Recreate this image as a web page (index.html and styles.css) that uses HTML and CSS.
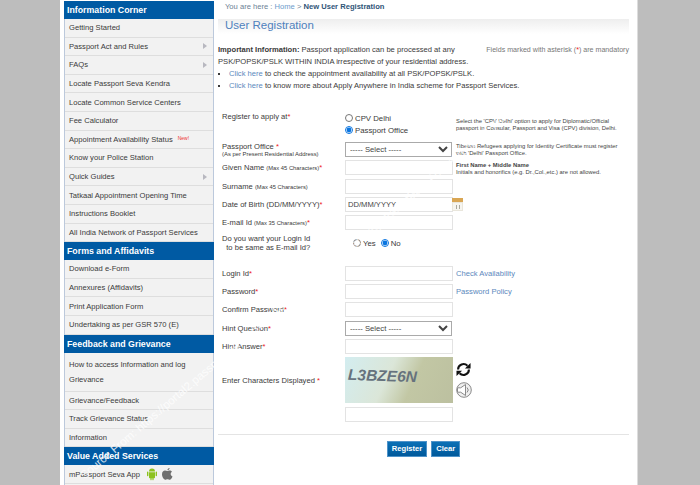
FILE: index.html
```html
<!DOCTYPE html>
<html lang="en">
<head>
<meta charset="UTF-8">
<meta name="viewport" content="width=device-width, initial-scale=1.0">
<title>User Registration</title>
<link rel="stylesheet" href="styles.css">
</head>
<body>
<div class="page">
  <div class="sidebar">
    <h3 class="side-head">Information Corner</h3>
    <a class="side-item">Getting Started</a>
    <a class="side-item">Passport Act and Rules<span class="arrow"></span></a>
    <a class="side-item">FAQs<span class="arrow"></span></a>
    <a class="side-item">Locate Passport Seva Kendra</a>
    <a class="side-item">Locate Common Service Centers</a>
    <a class="side-item">Fee Calculator</a>
    <a class="side-item">Appointment Availability Status<span class="new">New!</span></a>
    <a class="side-item">Know your Police Station</a>
    <a class="side-item">Quick Guides<span class="arrow"></span></a>
    <a class="side-item">Tatkaal Appointment Opening Time</a>
    <a class="side-item">Instructions Booklet</a>
    <a class="side-item">All India Network of Passport Services</a>
    <h3 class="side-head">Forms and Affidavits</h3>
    <a class="side-item">Download e-Form</a>
    <a class="side-item">Annexures (Affidavits)</a>
    <a class="side-item">Print Application Form</a>
    <a class="side-item">Undertaking as per GSR 570 (E)</a>
    <h3 class="side-head">Feedback and Grievance</h3>
    <a class="side-item tall">How to access Information and log Grievance</a>
    <a class="side-item">Grievance/Feedback</a>
    <a class="side-item">Track Grievance Status</a>
    <a class="side-item">Information</a>
    <h3 class="side-head">Value Added Services</h3>
    <a class="side-item">mPassport Seva App
      <svg class="app-icon" viewBox="0 0 14 14" width="14" height="14"><path fill="#8cc21f" d="M4 4.600a3 3 0 0 1 6 0zM4 5.200h6v5.200a.8.8 0 0 1-.8.8H8.600v1.600a.7.7 0 0 1-1.200 0v-1.600H6.600v1.600a.7.7 0 0 1-1.200 0v-1.600h-.6a.8.8 0 0 1-.8-.8zM2 5.200a.7.7 0 0 1 1.400 0v3.400a.7.7 0 0 1-1.400 0zM10.600 5.200a.7.7 0 0 1 1.400 0v3.400a.7.7 0 0 1-1.400 0z"/></svg>
      <svg class="app-icon" viewBox="0 0 14 14" width="14" height="14"><path fill="#6f6f6f" d="M9.600 1c.1 1.100-.9 2.300-2.200 2.300C7.300 2.100 8.400 1.100 9.600 1zM7.300 4.100c.6 0 1.300-.6 2.400-.6.900 0 1.800.5 2.300 1.200-2 1.200-1.600 3.900.5 4.700-.6 1.500-1.700 3.300-2.800 3.300-.9 0-1.200-.5-2.200-.5s-1.400.5-2.200.5C4 12.700 2 9.800 2 7.200c0-2.300 1.500-3.600 3-3.600.9 0 1.700.5 2.300.5z"/></svg>
    </a>
  </div>

  <div class="main">
    <p class="crumbs">You are here : <a class="crumb-link">Home</a> &gt; <b>New User Registration</b></p>
    <h1 class="title">User Registration</h1>

    <div class="info">
      <div class="info-top">
        <p><b>Important Information:</b> Passport application can be processed at any<br>PSK/POPSK/PSLK WITHIN INDIA irrespective of your residential address.</p>
        <span class="mandatory">Fields marked with asterisk (<i class="req">*</i>) are mandatory</span>
      </div>
      <ul class="info-list">
        <li><a class="link">Click here</a> to check the appointment availability at all PSK/POPSK/PSLK.</li>
        <li><a class="link">Click here</a> to know more about Apply Anywhere in India scheme for Passport Services.</li>
      </ul>
    </div>

    <form class="form">
      <div class="row radio-row">
        <div class="label">Register to apply at<i class="req">*</i></div>
        <div class="control radios">
          <label class="radio"><input type="radio" name="apply"> CPV Delhi</label>
          <label class="radio"><input type="radio" name="apply" checked> Passport Office</label>
        </div>
        <div class="note">Select the 'CPV Delhi' option to apply for Diplomatic/Official passport in Consular, Passport and Visa (CPV) division, Delhi.</div>
      </div>

      <div class="row">
        <div class="label">Passport Office <i class="req">*</i><small class="sub">(As per Present Residential Address)</small></div>
        <div class="control"><select class="select"><option>----- Select -----</option></select></div>
        <div class="note">Tibetan Refugees applying for Identity Certificate must register with 'Delhi' Passport Office.</div>
      </div>
      <div class="row">
        <div class="label">Given Name <small>(Max 45 Characters)</small><i class="req">*</i></div>
        <div class="control"><input class="text" type="text"></div>
        <div class="note name-note"><b>First Name + Middle Name</b><br>Initials and honorifics (e.g. Dr.,Col.,etc.) are not allowed.</div>
      </div>
      <div class="row">
        <div class="label">Surname <small>(Max 45 Characters)</small></div>
        <div class="control"><input class="text" type="text"></div>
      </div>
      <div class="row">
        <div class="label">Date of Birth (DD/MM/YYYY)<i class="req">*</i></div>
        <div class="control"><input class="text" type="text" value="DD/MM/YYYY"></div>
        <svg class="calendar" viewBox="0 0 11 13" width="11" height="13"><rect width="11" height="13" fill="#e9e6dc"/><rect width="11" height="4" fill="#d9a654"/><rect x="1" y="5" width="9" height="7" fill="#f6f5f0"/><path d="M4 7h1v4H4zM7 7h1v4H7z" fill="#a9a9a0"/></svg>
      </div>
      <div class="row">
        <div class="label">E-mail Id <small>(Max 35 Characters)</small><i class="req">*</i></div>
        <div class="control"><input class="text" type="text"></div>
      </div>
      <div class="row question-row">
        <div class="label question">Do you want your Login Id<br>&nbsp;&nbsp;to be same as E-mail Id?</div>
        <div class="control same-radios">
          <label class="radio"><input type="radio" name="same"> Yes</label>
          <label class="radio"><input type="radio" name="same" checked> No</label>
        </div>
      </div>

      <div class="row">
        <div class="label">Login Id<i class="req">*</i></div>
        <div class="control"><input class="text" type="text"></div>
        <a class="link side-link">Check Availability</a>
      </div>
      <div class="row">
        <div class="label">Password<i class="req">*</i></div>
        <div class="control"><input class="text" type="text"></div>
        <a class="link side-link">Password Policy</a>
      </div>
      <div class="row">
        <div class="label">Confirm Password<i class="req">*</i></div>
        <div class="control"><input class="text" type="text"></div>
      </div>
      <div class="row">
        <div class="label">Hint Question<i class="req">*</i></div>
        <div class="control"><select class="select"><option>----- Select -----</option></select></div>
      </div>
      <div class="row">
        <div class="label">Hint Answer<i class="req">*</i></div>
        <div class="control"><input class="text" type="text"></div>
      </div>

      <div class="row captcha-row">
        <div class="label">Enter Characters Displayed <i class="req">*</i></div>
        <div class="captcha"><span class="captcha-text">L3BZE6N</span></div>
        <div class="captcha-tools">
          <svg viewBox="0 0 16 16" width="15" height="15" fill="none" stroke="#111" stroke-width="2.200"><path d="M2.200 8a5.800 5.800 0 0 1 10-4"/><path d="M13.800 8a5.800 5.800 0 0 1-10 4"/><path d="M9.500 6.800h6V1z" fill="#111" stroke="none"/><path d="M6.500 9.200h-6V15z" fill="#111" stroke="none"/></svg>
          <svg viewBox="0 0 16 16" width="16" height="16" fill="#efefef" stroke="#8a8a8a" stroke-width="1"><circle cx="8" cy="8" r="7.300"/><path d="M1.500 5.800h3.200L9.500 2.500v11L4.700 10.200H1.500z" fill="#fff"/><path d="M11 5.500a3.500 3.500 0 0 1 0 5" fill="none"/></svg>
        </div>
      </div>
      <div class="row">
        <div class="label"></div>
        <div class="control"><input class="text" type="text"></div>
      </div>

      <div class="actions">
        <button class="btn" type="button">Register</button>
        <button class="btn" type="button">Clear</button>
      </div>
    </form>
  </div>
</div>
<div class="watermark">Source From: https://portal2.passportindia.gov.in/AppOnlineProject/user/RegistrationBaseAction?request_locale=en</div>
</body>
</html>
```

FILE: styles.css
```css
html, body {
  height: 100%;
}
body {
  font-family: "Liberation Sans", Arial, sans-serif;
  background-color: #bdbdbd;
  margin: 0;
  padding: 0;
  overflow: hidden;
  color: #333;
}
.page {
  display: flex;
  box-sizing: border-box;
  width: 578px;
  height: 485px;
  margin-left: 60px;
  padding: 1px 0 0 4px;
  background-color: #fff;
  border-right: 1px solid #ddd;
  overflow: hidden;
}

/* left menu */
.sidebar {
  box-sizing: border-box;
  width: 150px;
  flex: none;
  display: flex;
  flex-direction: column;
  border: solid #bcc9dc;
  border-width: 0 1px;
  background-color: #f2f2f2;
}
.side-head {
  box-sizing: border-box;
  height: 18px;
  margin: 0 -1px;
  padding-left: 3px;
  background-color: #005aa3;
  color: #fff;
  font-size: 8.800px;
  line-height: 18px;
  font-weight: bold;
}
.side-item {
  box-sizing: border-box;
  display: flex;
  align-items: center;
  height: 18.600px;
  padding: 0 4px;
  border-bottom: 1px solid #dedede;
  font-size: 7.600px;
  color: #3a3a3a;
  white-space: nowrap;
}
.side-item.tall {
  height: 39px;
  padding-right: 20px;
  white-space: normal;
  line-height: 15px;
}
.arrow {
  margin-left: auto;
  margin-right: 2px;
  border-left: 4px solid #b8b8c0;
  border-top: 3.500px solid transparent;
  border-bottom: 3.500px solid transparent;
}
.new {
  margin: -3px 0 0 5px;
  font-size: 5px;
  color: #e33;
}
.app-icon {
  margin-left: 5px;
}
.app-icon + .app-icon {
  margin-left: 1px;
}

/* main column */
.main {
  box-sizing: border-box;
  width: 411px;
  flex: none;
  margin-left: 4px;
  font-size: 7.600px;
}
.crumbs {
  height: 18px;
  margin: 0;
  padding-left: 7px;
  font-size: 7.600px;
  line-height: 11px;
  color: #6c7f95;
}
.crumbs b {
  color: #2f5578;
}
.crumb-link {
  color: #6e9bcb;
}
.title {
  box-sizing: border-box;
  height: 25px;
  margin: 0;
  padding-left: 7px;
  background: linear-gradient(to bottom, #eee, #fff 60%);
  color: #4f81bd;
  font-size: 11.500px;
  font-weight: normal;
  line-height: 13px;
}
.info {
  line-height: 12px;
  color: #3a3a3a;
}
.info p {
  margin: 0;
}
.info-top {
  display: flex;
  justify-content: space-between;
}
.mandatory {
  font-size: 7.100px;
  color: #777;
  white-space: nowrap;
}
.info-list {
  margin: 0;
  padding-left: 11px;
  list-style: square;
}
.link {
  color: #5b88bd;
}
.req {
  color: #e22;
  font-style: normal;
}

/* form rows */
.form {
  margin-top: 18px;
  padding-left: 4px;
}
.row {
  display: flex;
  align-items: center;
  height: 18.300px;
}
.label {
  width: 123px;
  flex: none;
  font-size: 7.600px;
  color: #3a3a3a;
  white-space: nowrap;
}
.label small {
  font-size: 5.800px;
}
.label .sub {
  display: block;
  font-size: 5.900px;
  line-height: 6px;
}
.control {
  width: 111px;
  flex: none;
}
.note {
  font-size: 5.850px;
  line-height: 7px;
  color: #444;
  width: 165px;
}
.name-note {
  padding-top: 3px;
}
.text {
  display: block;
  box-sizing: border-box;
  width: 108px;
  height: 15px;
  padding: 0 2px;
  border: 1px solid #e3e3e3;
  font-family: inherit;
  font-size: 7.600px;
  color: #444;
  outline: none;
}
.select {
  display: block;
  box-sizing: border-box;
  width: 107px;
  height: 15px;
  padding: 0;
  border: 1px solid #aaa;
  background-color: #fff;
  font-family: inherit;
  font-size: 7.700px;
  color: #444;
}
.calendar {
  margin-left: -4px;
}
.side-link {
  font-size: 7.600px;
}
.radio-row {
  align-items: flex-start;
  height: 30.500px;
}
.radio-row .label {
  padding-top: 2px;
}
.radio-row .note {
  padding-top: 8px;
}
.radios {
  display: flex;
  flex-direction: column;
  gap: 2px;
  padding-top: 3px;
}
.radio {
  display: flex;
  align-items: center;
  gap: 2px;
  height: 10px;
  font-size: 7.800px;
  color: #3a3a3a;
}
.radio input {
  width: 8px;
  height: 8px;
  margin: 0;
  accent-color: #0a75e0;
}
.question-row {
  box-sizing: border-box;
  height: 32px;
  padding-bottom: 9.500px;
}
.question {
  font-size: 7.600px;
  line-height: 9px;
}
.same-radios {
  display: flex;
  gap: 5px;
  padding-left: 8px;
  box-sizing: border-box;
}
.captcha-row {
  height: 50px;
  align-items: center;
}
.captcha {
  box-sizing: border-box;
  display: flex;
  align-items: center;
  width: 108px;
  height: 46px;
  margin-right: 3px;
  padding: 0 0 9px 3px;
  flex: none;
  background: linear-gradient(115deg, #d3edf0 0%, #dbe6d8 40%, #c2c7a4 62%, #bcc0a0 100%);
}
.captcha-text {
  font-size: 15.500px;
  font-weight: bold;
  font-style: italic;
  color: #66727d;
  transform: rotate(2deg);
}
.captcha-tools {
  display: flex;
  flex-direction: column;
  align-items: flex-start;
  gap: 5px;
}
.captcha-tools svg {
  display: block;
}
.actions {
  display: flex;
  justify-content: center;
  gap: 4px;
  margin: 10px 0 0 -4px;
  padding-top: 6px;
  border-top: 1px solid #e4e4e4;
}
.btn {
  height: 16px;
  padding: 0 4px;
  border: 1px solid #4f93c9;
  background: linear-gradient(to bottom, #0b70b6, #00599b);
  color: #fff;
  font-family: inherit;
  font-size: 7.600px;
  font-weight: bold;
}

/* copied-from stamp across the whole picture */
.watermark {
  position: absolute;
  left: 78px;
  top: 472px;
  transform: rotate(-40.500deg);
  transform-origin: 0 0;
  white-space: nowrap;
  color: #fff;
  font-size: 11.500px;
  opacity: .8;
}
```
